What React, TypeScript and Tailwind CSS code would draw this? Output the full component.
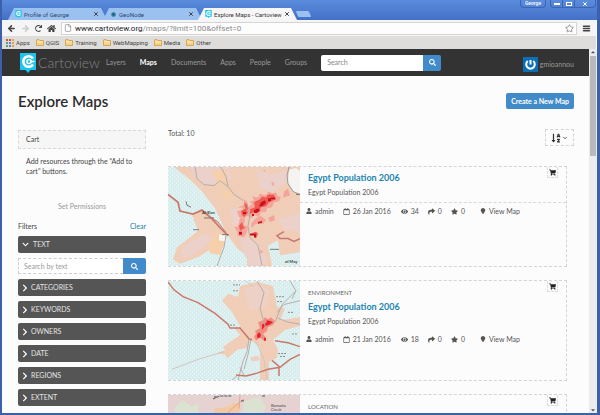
import type { ReactNode } from "react";
import {
  FaCaretDown,
  FaCaretUp,
  FaChevronDown,
  FaChevronRight,
  FaEye,
  FaHome,
  FaMapMarker,
  FaRedo,
  FaRegCalendar,
  FaSearch,
  FaShare,
  FaShoppingCart,
  FaSortAlphaDown,
  FaStar,
  FaUser,
} from "react-icons/fa";
import { LuArrowLeft, LuArrowRight, LuChevronDown, LuFile, LuMenu, LuStar, LuX } from "react-icons/lu";

function CartoIcon({ className }: { className: string }) {
  return (
    <svg viewBox="0 0 16 20" className={className} aria-hidden="true">
      <path d="M0 0H16V17H10.500L8 20L5.500 17H0Z" fill="#1cc5ee" />
      <path d="M13 5.500A5.300 5.300 0 1 0 13 11.500" fill="none" stroke="#fff" strokeWidth="2.600" />
      <circle cx="9" cy="8.500" r="2" fill="none" stroke="#fff" strokeWidth="1.600" />
      <path d="M10.500 8.500H14.500" stroke="#fff" strokeWidth="1.600" />
    </svg>
  );
}

function Tab({ title, icon, active }: { title: string; icon: ReactNode; active?: boolean }) {
  return (
    <div
      className={`-mr-[4px] flex h-[12px] w-[99px] items-center gap-[2px] pr-2 pl-[7px] text-[6px] [clip-path:polygon(6px_0,calc(100%-6px)_0,100%_100%,0_100%)] ${
        active ? "z-10 bg-[#f6f6f6] text-[#333]" : "bg-[#9bc1f1] text-[#2d4669]"
      }`}
    >
      {icon}
      <span className="grow whitespace-nowrap">{title}</span>
      <button aria-label={`Close ${title}`} className="text-[#444]">
        <LuX size={6} strokeWidth={4} />
      </button>
    </div>
  );
}

function Folder() {
  return (
    <svg viewBox="0 0 8 7" className="h-[7px] w-2" aria-hidden="true">
      <path d="M.5 6.500V1.500Q.5.500 1.500.500H3L4 1.500H7.500V6.500Z" fill="#f5d185" stroke="#cf9b45" strokeWidth=".8" />
      <path d="M1 3H7" stroke="#fff0c0" />
    </svg>
  );
}

function Browser() {
  return (
    <div className="shrink-0 font-['Roboto','Open_Sans',sans-serif]">
      <div className="flex h-5 items-end bg-linear-to-b from-[#5b8cdc] to-[#4470c8] pl-[6px]">
        <Tab title="Profile of George" icon={<CartoIcon className="h-[8px] w-[7px] shrink-0" />} />
        <Tab title="GeoNode" icon={<span className="mx-[1px] size-[5px] shrink-0 rounded-full border border-[#4c8fae] bg-[#1e6689]" />} />
        <Tab title="Explore Maps - Cartoview" active icon={<CartoIcon className="h-[8px] w-[7px] shrink-0" />} />
        <button aria-label="New tab" className="mb-[3px] ml-1 h-[6px] w-[13px] skew-x-[24deg] rounded-[1px] bg-[#9bc1f1]" />
        <div className="grow" />
        <div className="flex items-start gap-1 self-start pr-[1px]">
          <button className="h-[8px] w-[26px] rounded-b-sm border border-t-0 border-[#3c65b4] text-[5px] leading-[7px] font-medium text-white">
            George
          </button>
          <div className="flex h-[8px] divide-x divide-[#3c65b4] rounded-b-sm border border-t-0 border-[#3c65b4] text-white">
            <button aria-label="Minimise" className="flex w-3 items-end justify-center pb-[2px]">
              <span className="h-[2px] w-[6px] bg-white" />
            </button>
            <button aria-label="Maximise" className="flex w-3 items-center justify-center">
              <span className="h-[4px] w-[6px] border border-white" />
            </button>
            <button aria-label="Close" className="flex w-5 items-center justify-center">
              <LuX size={6} strokeWidth={4} />
            </button>
          </div>
        </div>
      </div>
      <div className="mr-[1px] bg-[#dfdddc]">
        <div className="flex h-[16px] items-center gap-[5px] bg-[#f5f5f5] pr-[5px] pl-[5px] text-[#444]">
          <button aria-label="Back"><LuArrowLeft size={9} strokeWidth={4} /></button>
          <button aria-label="Forward" className="text-[#ccc]"><LuArrowRight size={9} strokeWidth={4} /></button>
          <button aria-label="Reload"><FaRedo size={7} /></button>
          <button aria-label="Home"><FaHome size={9} /></button>
          <div className="flex h-[13px] grow items-center gap-[3px] border border-[#d5d5d5] bg-[#fdfdfd] px-[2px]">
            <LuFile size={8} className="text-[#888]" />
            <p className="grow text-[8px] leading-[11px] text-[#8a8a8a]">
              <span className="text-[#222]">www.cartoview.org</span>/maps/?limit=100&amp;offset=0
            </p>
            <button aria-label="Bookmark"><LuStar size={9} className="text-[#777]" /></button>
          </div>
          <button aria-label="Menu"><LuMenu size={9} strokeWidth={4} /></button>
        </div>
        <div className="flex h-[13px] items-center gap-[6px] pl-[4px] text-[6px] text-[#444]">
          <a href="#apps" className="flex items-center gap-[2px]">
            <svg viewBox="0 0 8 8" className="size-2" aria-hidden="true">
              {["#d85140", "#d85140", "#e9a13b", "#58a55c", "#5383ec", "#e9a13b", "#58a55c", "#5383ec", "#e9a13b"].map((c, i) => (
                <rect key={i} x={(i % 3) * 3} y={Math.floor(i / 3) * 3} width="2" height="2" fill={c} />
              ))}
            </svg>
            Apps
          </a>
          {["QGIS", "Training", "WebMapping", "Media", "Other"].map((b) => (
            <a key={b} href={`#${b}`} className="flex items-center gap-[2px]">
              <Folder />
              {b}
            </a>
          ))}
        </div>
      </div>
    </div>
  );
}

function Navbar() {
  return (
    <header className="flex h-[27px] shrink-0 items-center bg-[#333] pr-[15px] pl-[18px] text-[7px] text-[#999]">
      <a href="#home" className="flex items-center gap-[2px]">
        <CartoIcon className="h-5 w-4" />
        <span className="w-[68px] text-[14px] leading-5 font-light text-[#858585]">Cartoview</span>
      </a>
      <nav className="flex gap-[14px]">
        <a href="#layers">Layers</a>
        <a href="#maps" className="font-bold text-white">Maps</a>
        <a href="#documents">Documents</a>
        <a href="#apps">Apps</a>
        <a href="#people">People</a>
        <a href="#groups">Groups</a>
      </nav>
      <form className="ml-[14px] flex h-4">
        <input
          aria-label="Search"
          placeholder="Search"
          className="w-[102px] rounded-l-xs bg-white px-[6px] text-[7px] placeholder:text-[#888]"
        />
        <button type="button" aria-label="Search" className="flex w-[18px] items-center justify-center rounded-r-xs bg-[#428bca] text-white">
          <FaSearch size={7} />
        </button>
      </form>
      <a href="#profile" className="mt-1 ml-auto flex items-center gap-[2px]">
        <svg viewBox="0 0 15 15" className="size-[15px]" aria-hidden="true">
          <rect width="15" height="15" fill="#0b6fb5" />
          <path d="M4.800 4A4.300 4.300 0 1 0 10.200 4" fill="none" stroke="#fff" strokeWidth="2" />
          <path d="M7.500 3V7.500" stroke="#fff" strokeWidth="2" />
        </svg>
        gmioannou
      </a>
    </header>
  );
}

function Defs() {
  return (
    <svg className="absolute size-0" aria-hidden="true">
      <defs>
        <pattern id="sea" width="4" height="4" patternUnits="userSpaceOnUse">
          <rect width="4" height="4" fill="#d8eeee" />
          <path d="M0 0h1v1H0ZM2 2h1v1H2Z" fill="#f4f8f6" />
        </pattern>
        <pattern id="land" width="4" height="4" patternUnits="userSpaceOnUse">
          <rect width="4" height="4" fill="#f1cdb6" />
          <path d="M0 1h1v1H0ZM2 3h1v1H2Z" fill="#edd0c8" />
        </pattern>
      </defs>
    </svg>
  );
}

function MapOne() {
  return (
    <svg viewBox="0 0 132 101" preserveAspectRatio="none" className="size-full" role="img" aria-label="Egypt Population 2006 map">
      <rect width="132" height="101" fill="url(#sea)" />
      <path d="M6 0L22 13L34 25L47 42L59 69L70 84L79 90V101H104L100 80L110 75L112 90L132 87V0Z" fill="url(#land)" />
      <path d="M24 49L35 44L46 52L59 67L55 82L49 87L41 85L32 91L12 99L5 94L9 82L30 65Z" fill="url(#land)" />
      <g fill="#ebd1ca">
        <path d="M22 0H60L64 12L50 16L40 20L28 12Z" />
        <path d="M88 2L104 8L118 3L120 14L104 26L92 22Z" />
        <path d="M62 44L70 40L72 56L66 62Z" />
        <path d="M14 82L36 68L46 72L28 88L14 94Z" />
        <path d="M72 70L90 78L100 94L94 101H82L74 84Z" />
        <path d="M110 52L132 48V66L116 64Z" />
      </g>
      <g fill="#f6cfab">
        <path d="M44 4L58 2L60 20L50 16Z" />
        <path d="M40 80L50 64L57 76L52 90L42 88Z" />
        <path d="M52 22L62 26L66 34L56 32Z" />
      </g>
      <path d="M121 3L128 1L132 4V27L126 26L120 16Z" fill="#f5f4f2" />
      <path d="M51 69L57 69L58 76L51 75Z" fill="#f8f6f2" />
      <g fill="#f4a49a">
        <path d="M84 30L90 31L92 27L97 29L101 25L104 27L108 26L110 30H113L111 35L106 36L104 41L99 42L98 46L93 46L91 51L86 49L84 52L79 50L76 53L71 51L69 45L75 44L74 41L69 42L77 38L75 33L79 35L80 41L84 38L82 35L86 34Z" />
        <path d="M72 52L77 53L76 59L80 61L79 66L76 72L69 70L70 67L66 61L70 61Z" />
        <path d="M88 52L93 50L98 54L95 58L88 58L84 62L83 58Z" />
        <path d="M100 52L106 49L107 54L102 56Z" />
        <path d="M103 17L106 15L106 20ZM116 25L120 22L122 29L115 31ZM95 3h2v2ZM92 84l3 2l-2 3Z" />
      </g>
      <g fill="#ee5a50">
        <path d="M86 36L92 33L94 30L98 31L100 28L106 28L108 33L101 36L98 40L93 41L91 46L86 46L82 48V43L87 41Z" />
        <path d="M73 45L78 42L80 47L76 51L74 49ZM76 36l4 3v5l-3 -3ZM71 60l3 -4l1 4l2 2l-5 3Z" />
        <path d="M82 68L88 66L90 68L88 73L86 70Z" />
      </g>
      <g fill="#c9101f">
        <path d="M93 36L97 34L98 37L94 40L91 40ZM100 32h3v-1h4v2h-4v2h-3ZM86 44l4 -2l2 2l-3 3l-3 0ZM75 46h3v2h-3ZM71 66h3v3h-3ZM90 56l4 -1v2l-4 1ZM82 68h6v4h-2v-2h-4ZM84 48h2v2h-2Z" />
      </g>
      <g fill="none" stroke="#b5aca8" strokeWidth="1">
        <path d="M27 0L29 12L36 18L46 19L52 14L60 20L66 28L75 34" />
        <path d="M53 0L58 10L60 20" />
        <path d="M79 37L82 50L80 60L82 72L90 80L94 101" />
        <path d="M58 70L56 82L49 101" />
        <path d="M121 0L119 9L120 17L125 25L132 28" stroke="#999" />
      </g>
      <path d="M0 28L10 36L12 45L25 48L34 44L44 53L53 63L60 70" fill="none" stroke="#c8796a" strokeWidth="1.800" />
      <path d="M45 53L50 56L58 67" fill="none" stroke="#c8796a" />
      <path d="M116 66L109 70L112 73H120L126 76L132 73" fill="none" stroke="#c8796a" strokeWidth="1.500" />
      <g className="font-['Lato',sans-serif]" fill="#3a3a3a" fontSize="4" fontWeight="700">
        <text x="34" y="48">Al-Elan</text>
        <text x="117" y="98">of May</text>
      </g>
      <path d="M18 35l1 4l4 2M36 52h10M25 64h6M102 84h9M54 69h7M128 28h4" stroke="#777" fill="none" />
    </svg>
  );
}

function MapTwo() {
  return (
    <svg viewBox="0 0 132 101" preserveAspectRatio="none" className="size-full" role="img" aria-label="Egypt Population 2006 map">
      <rect width="132" height="101" fill="url(#sea)" />
      <path d="M54 20L60 13L70 16L72 5L89 1L105 5L109 26L117 28L112 40L132 37V46L117 50L105 60L110 70L109 78L101 83V101H92V68L80 58L72 46L64 32Z" fill="url(#land)" />
      <path d="M66 48L76 46L82 58L80 68L70 70L59 79L57 75L47 74L57 71L55 67L72 55Z" fill="url(#land)" />
      <path d="M76 8L92 4L102 10L98 26L82 30ZM82 78l8 -2l2 5l-8 1Z" fill="#eed1c6" />
      <path d="M90 42L95 40L97 37L100 39L103 37L107 41L105 45L100 47L99 51L95 54L98 58L96 61L92 58L88 61L86 57L88 54L87 51L92 48Z" fill="#f28d82" />
      <path d="M94 44L98 43L99 40L103 41L105 42L101 45L97 46L94 50ZM89 55l2 -3l2 3l-1 3h-3ZM96 58h2v3h-2Z" fill="#e3232b" />
      <g fill="none" stroke="#b3aeac">
        <path d="M81 59L79 72L75 82L70 101M83 59L80 75L76 90" />
        <path d="M89 0L96 12L92 28L97 46M107 42L114 24L128 10M109 32L116 24L132 20M110 38L120 42L132 44M122 0L128 10L124 18" />
        <path d="M4 90L30 80L56 72M88 62L96 80L99 101M86 6L78 0" stroke="#cfc5bf" />
        <path d="M70 96L64 101M72 88L76 96" />
      </g>
      <g fill="none" stroke="#c8796a" strokeWidth="1.500">
        <path d="M0 1L6 9L15 16L30 22L47 33L60 44L62 48L72 48L81 59L84 60" />
        <path d="M107 61L120 63L132 67" />
        <path d="M68 96L78 97L89 94L100 90L112 88L122 80L132 75M112 88L104 81M111 88V97" />
      </g>
      <path d="M65 4h7M65 10h6M108 16h9M109 21h6M120 32h5M110 74h9M112 77h6M62 45h5M124 54h5" stroke="#8b8b8b" strokeDasharray="2 1" />
    </svg>
  );
}

function MapThree() {
  return (
    <svg viewBox="0 0 132 101" preserveAspectRatio="none" className="size-full" role="img" aria-label="Location map">
      <rect width="132" height="101" fill="#e5d2d1" />
      <path d="M6 14L14 5L24 12L30 8V30H10ZM76 6L92 2L98 12L90 30L74 20Z" fill="#dbe2d0" />
      <path d="M46 14L60 12L66 8L72 10L70 30H46Z" fill="#f3caa0" />
      <path d="M60 18L66 12L76 4M72 0L71 14" stroke="#e5a58c" fill="none" />
      <path d="M45 4L52 1H64M73 6h3M46 2h4M94 1h3" stroke="#555" strokeDasharray="3 1" fill="none" />
      <g className="font-['Lato',sans-serif]" fill="#444" fontSize="4">
        <text x="103" y="12">Bonsoto</text>
        <text x="103" y="16">Creek</text>
      </g>
    </svg>
  );
}

function Sidebar() {
  return (
    <aside className="w-32 shrink-0 pt-px text-[7px] text-[#444]">
      <h2 className="h-[19px] border border-dashed border-[#d8d8d8] bg-[#f6f6f6] px-[7px] leading-[17px]">Cart</h2>
      <p className="mt-[7px] px-2 leading-[10px]">Add resources through the “Add to cart” buttons.</p>
      <button className="mt-[25px] block w-full text-center leading-[10px] text-[#999]">Set Permissions</button>
      <div className="mt-[10px] mb-[5px] flex justify-between leading-[10px]">
        <h2>Filters</h2>
        <a href="#clear" className="text-[#2080aa]">Clear</a>
      </div>
      <button className="flex h-[17px] w-full items-center gap-[4px] rounded-xs bg-[#555] px-1 text-[#e4e4e4]">
        <FaChevronDown size={7} className="text-white" />
        TEXT
      </button>
      <form className="mt-[5px] mb-[5px] flex h-4">
        <input
          aria-label="Search by text"
          placeholder="Search by text"
          className="min-w-0 grow border border-r-0 border-dashed border-[#ccc] bg-white px-[5px] text-[7px] placeholder:text-[#999]"
        />
        <button type="button" aria-label="Search" className="flex w-[23px] items-center justify-center rounded-r-xs bg-[#428bca] text-white">
          <FaSearch size={7} />
        </button>
      </form>
      <div className="flex flex-col gap-[5px]">
        {["CATEGORIES", "KEYWORDS", "OWNERS", "DATE", "REGIONS", "EXTENT"].map((f) => (
          <button key={f} className="flex h-[17px] items-center gap-[2px] rounded-xs bg-[#555] px-[3px] text-[#e4e4e4]">
            <FaChevronRight size={8} className="text-white" />
            {f}
          </button>
        ))}
      </div>
    </aside>
  );
}

type Details = { title: string; date: string; views: number };
type Item = { id: number; category?: string; details?: Details; map: ReactNode };

const items: Item[] = [
  { id: 1, details: { title: "Egypt Population 2006", date: "26 Jan 2016", views: 34 }, map: <MapOne /> },
  {
    id: 2,
    category: "ENVIRONMENT",
    details: { title: "Egypt Population 2006", date: "21 Jan 2016", views: 18 },
    map: <MapTwo />,
  },
  { id: 3, category: "LOCATION", map: <MapThree /> },
];

function Meta({ date, views }: Details) {
  return (
    <ul className="flex items-center pl-[6px] text-[7px] leading-[10px] text-[#555]">
      <li className="mr-[9px] flex items-center gap-[3px]"><FaUser size={6} />admin</li>
      <li className="mr-[10px] flex items-center gap-[3px]"><FaRegCalendar size={7} />{date}</li>
      <li className="mr-[9px] flex items-center gap-[3px]"><FaEye size={7} />{views}</li>
      <li className="mr-[9px] flex items-center gap-[3px]"><FaShare size={7} />0</li>
      <li className="mr-[15px] flex items-center gap-[3px]"><FaStar size={7} />0</li>
      <li><a href="#view" className="flex items-center gap-[3px]"><FaMapMarker size={6} />View Map</a></li>
    </ul>
  );
}

function Card({ category, details, map }: Item) {
  return (
    <article className="flex h-[101px] border border-l-0 border-dashed border-[#d4d4d4]">
      <div className="w-[132px] shrink-0">{map}</div>
      <div className="min-w-0 grow">
        <div className={`flex justify-between pl-2 ${category ? "mb-[5px] h-[48px]" : "mb-[3px] h-[36px] border-b border-dashed border-[#d8d8d8]"}`}>
          <div>
            {category ? <p className="mt-[8px] text-[6px] leading-[8px] text-[#666]">{category}</p> : null}
            {details ? (
              <>
                <h3 className={`text-[9px] leading-[12px] font-bold text-[#1c85b0] ${category ? "mt-[4px]" : "mt-[5px]"}`}>
                  <a href="#map">{details.title}</a>
                </h3>
                <p className="mt-[4px] text-[7px] leading-[9px] text-[#555]">{details.title}</p>
              </>
            ) : null}
          </div>
          <button aria-label="Add to cart" className="mr-2 flex h-[11px] w-[11px] items-center justify-center border border-t-0 border-dashed border-[#ddd] text-[#222]">
            <FaShoppingCart size={7} />
          </button>
        </div>
        {details ? <Meta {...details} /> : null}
      </div>
    </article>
  );
}

export default function App() {
  return (
    <div className="flex h-screen flex-col overflow-hidden border-r-[3px] border-b-2 border-l-2 border-[#3b61ad] bg-[#fcfcfc] font-['Lato',sans-serif]">
      <Browser />
      <div className="flex min-h-0 grow">
        <div className="flex min-w-0 grow flex-col overflow-hidden">
          <Navbar />
          <div className="pr-[15px] pl-4">
            <div className="mt-[17px] flex items-center justify-between">
              <h1 className="text-[15px] leading-4 font-semibold text-[#2c2c2c]">Explore Maps</h1>
              <button className="h-4 rounded-xs bg-[#428bca] px-[5px] text-[7px] font-bold text-white">Create a New Map</button>
            </div>
            <div className="mt-[20px] flex gap-[22px]">
              <Sidebar />
              <main className="min-w-0 grow">
                <div className="flex h-[37px] items-start justify-between text-[7px] text-[#555]">
                  <p className="leading-[9px]">Total: 10</p>
                  <button aria-label="Sort" className="flex h-[17px] w-[29px] items-center justify-center gap-[1px] border border-dashed border-[#d4d4d4] text-[#333]">
                    <FaSortAlphaDown size={10} />
                    <LuChevronDown size={6} strokeWidth={3} />
                  </button>
                </div>
                <div className="mr-[7px] flex flex-col gap-[13px]">
                  {items.map((item) => (
                    <Card key={item.id} {...item} />
                  ))}
                </div>
              </main>
            </div>
          </div>
        </div>
        <div className="flex w-2 shrink-0 flex-col items-center bg-[#ececec] text-[#555]">
          <FaCaretUp size={6} />
          <div className="mt-[1px] h-[100px] w-[6px] bg-[#b9b9b9]" />
          <FaCaretDown size={6} className="mt-auto" />
        </div>
      </div>
      <Defs />
    </div>
  );
}
